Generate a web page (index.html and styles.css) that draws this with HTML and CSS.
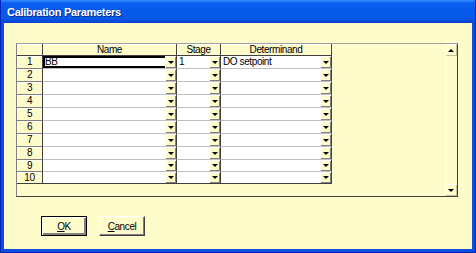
FILE: index.html
```html
<!DOCTYPE html>
<html lang="en">
<head>
    <meta charset="UTF-8">
    <title>Calibration Parameters</title>
    <link rel="stylesheet" href="styles.css">
</head>
<body>
    <div class="window">
        <div class="titlebar">Calibration Parameters</div>
        <div class="client">
            <div class="grid-box">
                <div class="grid-area">
                    <div class="table">
                        <div class="hd"></div>
                        <div class="hd">Name</div>
                        <div class="hd">Stage</div>
                        <div class="hd">Determinand</div>

                        <div class="num">1</div>
                        <div class="cell focus"><span class="val">BB</span><span class="drop"></span></div>
                        <div class="cell"><span class="val">1</span><span class="drop"></span></div>
                        <div class="cell"><span class="val">DO setpoint</span><span class="drop"></span></div>

                        <div class="num">2</div>
                        <div class="cell"><span class="val"></span><span class="drop"></span></div>
                        <div class="cell"><span class="val"></span><span class="drop"></span></div>
                        <div class="cell"><span class="val"></span><span class="drop"></span></div>

                        <div class="num">3</div>
                        <div class="cell"><span class="val"></span><span class="drop"></span></div>
                        <div class="cell"><span class="val"></span><span class="drop"></span></div>
                        <div class="cell"><span class="val"></span><span class="drop"></span></div>

                        <div class="num">4</div>
                        <div class="cell"><span class="val"></span><span class="drop"></span></div>
                        <div class="cell"><span class="val"></span><span class="drop"></span></div>
                        <div class="cell"><span class="val"></span><span class="drop"></span></div>

                        <div class="num">5</div>
                        <div class="cell"><span class="val"></span><span class="drop"></span></div>
                        <div class="cell"><span class="val"></span><span class="drop"></span></div>
                        <div class="cell"><span class="val"></span><span class="drop"></span></div>

                        <div class="num">6</div>
                        <div class="cell"><span class="val"></span><span class="drop"></span></div>
                        <div class="cell"><span class="val"></span><span class="drop"></span></div>
                        <div class="cell"><span class="val"></span><span class="drop"></span></div>

                        <div class="num">7</div>
                        <div class="cell"><span class="val"></span><span class="drop"></span></div>
                        <div class="cell"><span class="val"></span><span class="drop"></span></div>
                        <div class="cell"><span class="val"></span><span class="drop"></span></div>

                        <div class="num">8</div>
                        <div class="cell"><span class="val"></span><span class="drop"></span></div>
                        <div class="cell"><span class="val"></span><span class="drop"></span></div>
                        <div class="cell"><span class="val"></span><span class="drop"></span></div>

                        <div class="num">9</div>
                        <div class="cell"><span class="val"></span><span class="drop"></span></div>
                        <div class="cell"><span class="val"></span><span class="drop"></span></div>
                        <div class="cell"><span class="val"></span><span class="drop"></span></div>

                        <div class="num last">10</div>
                        <div class="cell last"><span class="val"></span><span class="drop"></span></div>
                        <div class="cell last"><span class="val"></span><span class="drop"></span></div>
                        <div class="cell last"><span class="val"></span><span class="drop"></span></div>
                    </div>
                </div>
                <div class="vscroll">
                    <div class="sbtn up"></div>
                    <div class="track"></div>
                    <div class="sbtn down"></div>
                </div>
            </div>
            <div class="buttons">
                <button class="btn default"><u>O</u>K</button>
                <button class="btn"><u>C</u>ancel</button>
            </div>
        </div>
    </div>
</body>
</html>
```

FILE: styles.css
```css
body {
    margin: 0;
    padding: 0;
    font-family: "Liberation Sans", Arial, sans-serif;
    background-color: #fffccc;
}
.window {
    width: 476px;
    height: 253px;
    box-sizing: border-box;
    background-color: #0a4fe2;
    border: 1px solid #0024b8;
    border-top: none;
    display: flex;
    flex-direction: column;
}
.titlebar {
    height: 22px;
    box-sizing: border-box;
    padding: 3px 0 0 6px;
    line-height: 19px;
    font-size: 11px;
    font-weight: bold;
    letter-spacing: -0.3px;
    color: white;
    text-shadow: 1px 1px #0a2a8a;
    background: linear-gradient(to bottom, #3a8cff 0, #0a60f0 3px, #0558ea 12px, #0a5ae8 18px, #0546dc 22px);
}
.client {
    flex: 1;
    margin: 0 3px 3px 3px;
    background-color: #fffccc;
    border-top: 1px solid #0a3fd0;
    padding: 20px 0 0 12px;
    font-size: 10px;
    letter-spacing: -0.4px;
    color: black;
}
.grid-box {
    width: 442px;
    height: 154px;
    box-sizing: border-box;
    display: flex;
    border-left: 1px solid #808080;
    border-top: 1px solid #a0a0a0;
    border-right: 1px solid #404040;
    border-bottom: 1px solid #404040;
}
.grid-area {
    flex: 1;
}
.table {
    display: grid;
    grid-template-columns: 26px 134px 44px 111px;
    grid-template-rows: 12px repeat(8, 13px) 12px 12px;
    width: 315px;
}
.hd, .num {
    box-sizing: border-box;
    background-color: #fffccc;
    border-right: 1px solid #404040;
    border-bottom: 1px solid #404040;
    box-shadow: inset 1px 1px #ffffff;
    text-align: center;
    line-height: 12px;
}
.num {
    border-bottom-color: #808080;
}
.num.last {
    border-bottom-color: #404040;
}
.cell {
    box-sizing: border-box;
    display: flex;
    background-color: white;
    border-right: 1px solid #404040;
    border-bottom: 1px solid #c0c0c0;
}
.cell.last {
    border-bottom-color: #404040;
}
.val {
    flex: 1;
    padding-left: 2px;
    line-height: 12px;
    white-space: nowrap;
    overflow: hidden;
}
.cell.focus .val {
    box-shadow: inset 2px 2px #000, inset 0 -2px #000;
}
.drop {
    width: 11px;
    display: flex;
    align-items: center;
    justify-content: center;
    background-color: #fffccc;
    box-shadow: inset 1px 1px #ffffff, inset -1px -1px #808080;
}
.drop::after, .sbtn::after {
    content: "";
    border-left: 3px solid transparent;
    border-right: 3px solid transparent;
    border-top: 3px solid black;
}
.vscroll {
    width: 12px;
    display: flex;
    flex-direction: column;
}
.sbtn {
    height: 12px;
    display: flex;
    align-items: center;
    justify-content: center;
    background-color: #fffccc;
    box-shadow: inset 1px 1px #ffffff, inset -1px -1px #c0c0a0;
}
.sbtn.up::after {
    border-top: none;
    border-bottom: 3px solid black;
}
.track {
    flex: 1;
    border-left: 1px solid #ffffff;
}
.buttons {
    display: flex;
    gap: 12px;
    margin: 19px 0 0 25px;
}
.btn {
    width: 46px;
    height: 20px;
    padding: 0;
    font-family: "Liberation Sans", Arial, sans-serif;
    font-size: 10px;
    letter-spacing: -0.4px;
    color: black;
    background-color: #fffccc;
    border: 1px solid;
    border-color: #ffffff #404040 #404040 #ffffff;
    box-shadow: inset -1px -1px #808080;
}
.btn.default {
    border: 1px solid black;
    box-shadow: inset 1px 1px #ffffff, inset -2px -2px #808080;
}
```
